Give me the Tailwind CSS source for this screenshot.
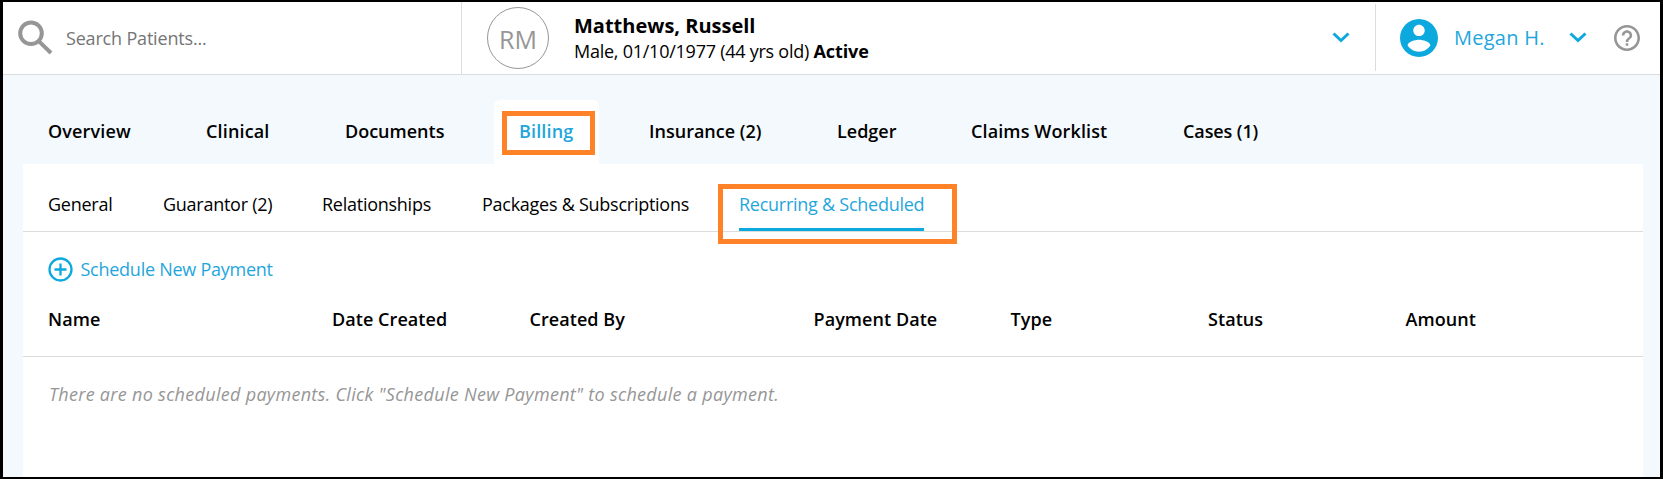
<!DOCTYPE html>
<html lang="en">
<head>
<meta charset="utf-8">
<title>Billing - Recurring &amp; Scheduled</title>
<script src="https://cdn.jsdelivr.net/npm/@tailwindcss/browser@4"></script>
</head>
<body class="h-[479px] w-[1663px] overflow-hidden font-['Open_Sans',sans-serif] text-[18px] leading-6 text-black">
<div class="flex h-full w-full flex-col overflow-hidden border-x-[3px] border-y-2 border-black bg-[#f3f9fc]">
  <header class="flex h-[73px] shrink-0 border-b border-[#dcdcdc] bg-white">
    <div class="flex w-[459px] shrink-0 items-center border-r border-[#dcdcdc] pl-[15px]">
      <svg class="-mt-px size-[35px] shrink-0" viewBox="0 0 35 35" fill="none" stroke="#969696" stroke-width="4"><circle cx="13" cy="13.2" r="10.8"/><path d="M21 21.4 33 33"/></svg>
      <span class="ml-[13px] tracking-[-0.180px] text-[#757575]">Search Patients...</span>
    </div>
    <div class="flex grow items-center">
      <div class="mb-px ml-[25px] flex size-[62px] shrink-0 items-center justify-center rounded-full border border-[#969696] pt-0.5 text-[25px] text-[#969696]">RM</div>
      <div class="ml-[25px] grow">
        <div class="h-[26px] pt-px text-[20px] leading-[26px] font-bold">Matthews, Russell</div>
        <div class="h-[26px] leading-[26px] tracking-[-0.250px]">Male, 01/10/1977 (44 yrs old) <span class="font-bold tracking-[-0.100px]">Active</span></div>
      </div>
      <svg class="mr-[25px] mb-px h-[11px] w-[18px]" viewBox="0 0 18 11" fill="none" stroke="#0ca9df" stroke-width="3"><path d="M1.500 1.500 9 8.500l7.500-7"/></svg>
    </div>
    <div class="mt-0.5 flex h-[67px] w-[285px] shrink-0 items-center border-l border-[#dcdcdc]">
      <svg class="ml-[24px] size-[38px]" viewBox="2 2 20 20" fill="#0ca9df"><path d="M12 2C6.480 2 2 6.480 2 12s4.480 10 10 10 10-4.480 10-10S17.520 2 12 2zm0 3c1.660 0 3 1.340 3 3s-1.340 3-3 3-3-1.340-3-3 1.340-3 3-3zm0 14.200c-2.500 0-4.710-1.280-6-3.220.030-1.990 4-3.080 6-3.080 1.990 0 5.970 1.090 6 3.080-1.290 1.940-3.500 3.220-6 3.220z"/></svg>
      <span class="ml-[16px] w-[115px] text-[20px] tracking-[0.250px] text-[#1fa6dc]">Megan H.</span>
      <svg class="h-[11px] w-[18px]" viewBox="0 0 18 11" fill="none" stroke="#0ca9df" stroke-width="3"><path d="M1.500 1.500 9 8.500l7.500-7"/></svg>
      <svg class="ml-[27px] size-[26px]" viewBox="2 2 20 20" fill="#969696"><path d="M11 18h2v-2h-2v2zm1-16C6.480 2 2 6.480 2 12s4.480 10 10 10 10-4.480 10-10S17.520 2 12 2zm0 18c-4.410 0-8-3.590-8-8s3.590-8 8-8 8 3.590 8 8-3.590 8-8 8zm0-14c-2.210 0-4 1.790-4 4h2c0-1.100.900-2 2-2s2 .900 2 2c0 2-3 1.750-3 5h2c0-2.250 3-2.500 3-5 0-2.210-1.790-4-4-4z"/></svg>
    </div>
  </header>

  <nav class="flex h-[89px] shrink-0 pt-[25px] pl-[45px] leading-[62px] font-semibold">
    <a class="h-16 w-[158px] tracking-[0.150px]">Overview</a>
    <a class="h-16 w-[139px] tracking-[0.150px]">Clinical</a>
    <a class="h-16 w-[149px]">Documents</a>
    <a class="relative h-16 w-[105px] rounded-t-md bg-white pl-[25px] tracking-[0.150px] text-[#1fa6dc]">Billing
      <span class="absolute top-[11px] left-2 h-11 w-[93px] border-5 border-[#ff8128]"></span>
    </a>
    <a class="ml-[50px] h-16 w-[188px]">Insurance (2)</a>
    <a class="h-16 w-[134px]">Ledger</a>
    <a class="h-16 w-[212px] tracking-[0.120px]">Claims Worklist</a>
    <a class="h-16 tracking-[-0.100px]">Cases (1)</a>
  </nav>

  <main class="mr-[17px] ml-[20px] grow bg-white">
    <nav class="flex h-[68px] border-b border-[#dcdcdc] pl-[25px] leading-[80px] tracking-[-0.260px] whitespace-nowrap">
      <a class="w-[115px]">General</a>
      <a class="w-[159px]">Guarantor (2)</a>
      <a class="w-[160px]">Relationships</a>
      <a class="w-[257px]">Packages &amp; Subscriptions</a>
      <a class="relative h-[67px] w-[185px] border-b-3 border-[#0ca9df] text-[#1fa6dc]">Recurring &amp; Scheduled
        <span class="absolute top-[20px] -left-[21px] h-[60px] w-[239px] border-5 border-[#ff8128]"></span>
      </a>
    </nav>
    <div class="flex h-[75px] items-center pl-[25px] text-[#1fa6dc]">
      <svg class="size-[25px]" viewBox="0 0 25 25" fill="none" stroke="#0ca9df" stroke-width="2.300"><circle cx="12.500" cy="12.500" r="11"/><path d="M12.500 6.500v12M6.500 12.500h12"/></svg>
      <span class="ml-[7.500px] pb-0.5 tracking-[-0.260px]">Schedule New Payment</span>
    </div>
    <div class="grid h-[50px] grid-cols-[284px_197.500px_284px_197px_197.500px_197.500px_1fr] border-b border-[#dcdcdc] pl-[25px] leading-[24px] font-semibold tracking-[0.060px]">
      <span>Name</span><span>Date Created</span><span>Created By</span><span>Payment Date</span><span>Type</span><span>Status</span><span>Amount</span>
    </div>
    <p class="pt-[25px] pl-[26px] tracking-[0.300px] text-[#969696] italic">There are no scheduled payments. Click "Schedule New Payment" to schedule a payment.</p>
  </main>
</div>
</body>
</html>
